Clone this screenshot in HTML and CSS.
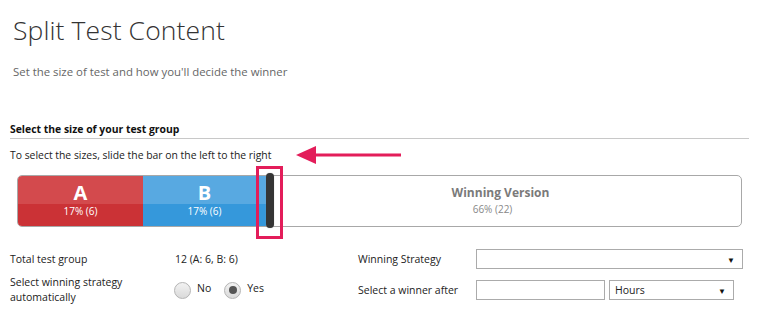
FILE: index.html
```html
<!DOCTYPE html>
<html>
<head>
<meta charset="utf-8">
<link rel="stylesheet" href="styles.css">
</head>
<body>
<div class="page">
  <h1 class="title">Split Test Content</h1>
  <p class="subtitle">Set the size of test and how you'll decide the winner</p>

  <h2 class="section-title">Select the size of your test group</h2>
  <div class="hint-row">
    <p class="hint">To select the sizes, slide the bar on the left to the right</p>
    <svg class="arrow" width="106" height="20" viewBox="0 0 106 20">
      <polygon points="0,10 20,1 20,19" fill="#e31d5a"/>
      <rect x="18" y="8.5" width="87" height="3" fill="#e31d5a"/>
    </svg>
  </div>

  <div class="splitbar">
    <div class="seg seg-a">
      <span class="seg-letter">A</span>
      <span class="seg-pct">17% (6)</span>
    </div>
    <div class="seg seg-b">
      <span class="seg-letter">B</span>
      <span class="seg-pct">17% (6)</span>
    </div>
    <div class="seg seg-win">
      <span class="win-title">Winning Version</span>
      <span class="win-pct">66% (22)</span>
    </div>
    <div class="handle"></div>
    <div class="highlight"></div>
  </div>

  <div class="form">
    <div class="label">Total test group</div>
    <div class="value">12 (A: 6, B: 6)</div>
    <div class="label2">Winning Strategy</div>
    <div class="select select-wide"><span></span><span class="caret">▼</span></div>

    <div class="label label-multi">Select winning strategy<br>automatically</div>
    <div class="value radios">
      <span class="radio"></span><span class="radio-label">No</span>
      <span class="radio checked"></span><span class="radio-label">Yes</span>
    </div>
    <div class="label2">Select a winner after</div>
    <div class="controls">
      <div class="input"></div>
      <div class="select select-hours"><span class="sel-text">Hours</span><span class="caret">▼</span></div>
    </div>
  </div>
</div>
</body>
</html>
```
FILE: styles.css
```css
html, body {
  margin: 0;
  padding: 0;
  background: #fff;
}
body {
  font-family: "Open Sans", "Noto Sans", sans-serif;
  color: #222;
  font-size: 10.5px;
}
.page {
  padding: 0 0 0 10px;
  width: 739px;
}
.title {
  margin: 13px 0 0 3px;
  font-size: 26.5px;
  line-height: 34px;
  font-weight: 300;
  color: #333;
  letter-spacing: 0.1px;
}
.subtitle {
  margin: 17px 0 0 3px;
  font-size: 11.4px;
  line-height: 16px;
  color: #666;
}
.section-title {
  margin: 41px 0 0 0;
  font-size: 10.4px;
  line-height: 16px;
  font-weight: 700;
  color: #111;
  padding-bottom: 1px;
  border-bottom: 1px solid #c8c8c8;
}
.hint-row {
  display: flex;
  align-items: center;
  margin-top: 8px;
  height: 16px;
}
.hint {
  margin: 0;
  font-size: 10.4px;
  line-height: 16px;
  color: #222;
}
.arrow {
  margin-left: 25px;
  flex: none;
}
.splitbar {
  position: relative;
  display: flex;
  margin: 12px 0 0 7px;
  width: 723px;
  height: 50px;
  border: 1px solid #a8a8a8;
  border-radius: 5px;
}
.seg {
  display: flex;
  flex-direction: column;
  align-items: center;
  justify-content: center;
}
.seg-a {
  width: 125px;
  border-radius: 4px 0 0 4px;
  background: linear-gradient(#d34a4d 0, #d34a4d 55%, #cb3236 55%, #cb3236 100%);
  color: #fff;
}
.seg-b {
  width: 123px;
  background: linear-gradient(#58a9e1 0, #58a9e1 55%, #3598db 55%, #3598db 100%);
  color: #fff;
}
.seg-letter {
  font-size: 20px;
  line-height: 22px;
  font-weight: 700;
  margin-top: -3px;
}
.seg-pct {
  font-size: 10px;
  line-height: 14px;
}
.seg-win {
  flex: 1;
  color: #777;
  padding-right: 6px;
}
.win-title {
  font-size: 12px;
  line-height: 18px;
  font-weight: 700;
  color: #7a7a7a;
  margin-top: -3px;
}
.win-pct {
  font-size: 10px;
  line-height: 14px;
  color: #888;
  margin-right: 16px;
}
.handle {
  position: absolute;
  left: 248px;
  top: -3px;
  width: 8px;
  height: 55px;
  border-radius: 4px;
  background: #353535;
  box-shadow: 0 0 1px #999;
}
.highlight {
  position: absolute;
  left: 238px;
  top: -10px;
  width: 21px;
  height: 67px;
  border: 3px solid #e31d5a;
}
.form {
  display: grid;
  grid-template-columns: 165px 183px 118px 267px;
  grid-template-rows: 20px 30px;
  row-gap: 6px;
  margin-top: 22px;
  align-items: center;
  font-size: 10.5px;
  color: #222;
}
.label, .label2, .value {
  line-height: 15px;
}
.value { color: #222; }
.radios {
  display: flex;
  align-items: center;
}
.radio {
  width: 15px;
  height: 15px;
  border: 1px solid #b4b4b4;
  border-radius: 50%;
  background: linear-gradient(#f2f2f2, #dadada);
  position: relative;
  margin-left: -1px;
}
.radio.checked::after {
  content: "";
  position: absolute;
  left: 3.5px;
  top: 3.5px;
  width: 8px;
  height: 8px;
  border-radius: 50%;
  background: #555;
}
.radio-label {
  margin: -4px 14px 0 6px;
}
.select {
  display: flex;
  align-items: center;
  justify-content: space-between;
  height: 18px;
  border: 1px solid #ababab;
  background: #fff;
  box-sizing: content-box;
}
.select-wide {
  width: 265px;
}
.caret {
  font-size: 8px;
  color: #111;
  margin-right: 7px;
}
.controls {
  display: flex;
  gap: 4px;
}
.input {
  width: 127px;
  height: 18px;
  border: 1px solid #ababab;
}
.select-hours {
  width: 123px;
}
.sel-text {
  margin-left: 5px;
}
```
